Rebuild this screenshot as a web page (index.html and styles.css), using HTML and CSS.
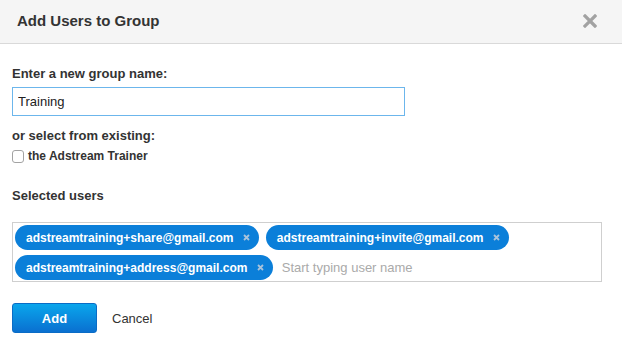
FILE: index.html
```html
<!DOCTYPE html>
<html lang="en">
<head>
    <meta charset="UTF-8" />
    <meta name="viewport" content="width=device-width, initial-scale=1.0" />
    <title>Add Users to Group</title>
    <link rel="stylesheet" href="styles.css">
</head>
<body>
    <div class="modal">
        <header class="modal-header">
            <h1>Add Users to Group</h1>
            <button class="close" aria-label="Close">
                <svg width="14" height="14" viewBox="0 0 14 14">
                    <path d="M2 2 L12 12 M12 2 L2 12" stroke="#a2a2a2" stroke-width="3.2" stroke-linecap="square" />
                </svg>
            </button>
        </header>
        <section class="modal-body">
            <label class="field-label" for="groupName">Enter a new group name:</label>
            <input type="text" id="groupName" class="group-input" value="Training" />

            <p class="field-label existing">or select from existing:</p>
            <label class="check-row">
                <input type="checkbox" class="check" />
                <span>the Adstream Trainer</span>
            </label>

            <p class="field-label selected">Selected users</p>
            <div class="tag-box">
                <span class="tag">adstreamtraining+share@gmail.com <i class="tag-remove"><svg width="7" height="7" viewBox="0 0 7 7"><path d="M1 1 L6 6 M6 1 L1 6" stroke="#a9c3db" stroke-width="1.8" /></svg></i></span>
                <span class="tag">adstreamtraining+invite@gmail.com <i class="tag-remove"><svg width="7" height="7" viewBox="0 0 7 7"><path d="M1 1 L6 6 M6 1 L1 6" stroke="#a9c3db" stroke-width="1.8" /></svg></i></span>
                <span class="tag">adstreamtraining+address@gmail.com <i class="tag-remove"><svg width="7" height="7" viewBox="0 0 7 7"><path d="M1 1 L6 6 M6 1 L1 6" stroke="#a9c3db" stroke-width="1.8" /></svg></i></span>
                <input type="text" class="tag-input" placeholder="Start typing user name" />
            </div>

            <div class="actions">
                <button class="btn-add">Add</button>
                <a href="#" class="cancel">Cancel</a>
            </div>
        </section>
    </div>
</body>
</html>
```

FILE: styles.css
```css
html, body {
    margin: 0;
    padding: 0;
    font-family: 'Liberation Sans', Arial, sans-serif;
    font-size: 13px;
    color: #333;
    background-color: #fff;
}
* {
    box-sizing: border-box;
}
.modal-header {
    display: flex;
    align-items: center;
    justify-content: space-between;
    height: 44px;
    padding: 0 25px 2px 17px;
    background-color: #f5f5f5;
    border-bottom: 1px solid #d9d9d9;
}
.modal-header h1 {
    margin: 0;
    font-size: 15px;
    font-weight: bold;
    color: #333;
}
.close {
    display: flex;
    padding: 0;
    border: none;
    background: none;
    cursor: pointer;
}
.modal-body {
    padding: 22px 12px 0;
}
.field-label {
    display: block;
    margin: 0;
    font-weight: bold;
    line-height: 16px;
    color: #333;
}
.group-input {
    display: block;
    width: 393px;
    height: 29px;
    margin-top: 5px;
    padding: 0 5px;
    border: 1px solid #6cb6ec;
    outline: none;
    font-family: inherit;
    font-size: 13px;
    color: #222;
}
.existing {
    margin-top: 12px;
}
.check-row {
    display: flex;
    align-items: center;
    gap: 4px;
    margin-top: 4px;
    line-height: 16px;
    font-size: 12px;
    font-weight: bold;
}
.check {
    -webkit-appearance: none;
    appearance: none;
    width: 12px;
    height: 13px;
    margin: 0;
    border: 1px solid #a3a3a3;
    border-radius: 3px;
    background: #fff;
}
.selected {
    margin-top: 24px;
}
.tag-box {
    display: flex;
    flex-wrap: wrap;
    align-items: center;
    column-gap: 7px;
    row-gap: 3px;
    width: 590px;
    height: 60px;
    margin-top: 18px;
    padding: 1px 2px 0;
    border: 1px solid #cfcfcf;
}
.tag {
    display: inline-flex;
    align-items: center;
    height: 25px;
    padding: 0 9px 0 11px;
    border-radius: 13px;
    background-color: #0b7fd9;
    color: #fff;
    font-size: 12px;
    font-weight: bold;
    white-space: pre;
}
.tag-remove {
    display: flex;
    margin-left: 6px;
}
.tag-input {
    flex: 1;
    min-width: 150px;
    height: 25px;
    padding: 0 2px;
    border: none;
    outline: none;
    font-family: inherit;
    font-size: 13px;
}
.tag-input::placeholder {
    color: #aaa;
}
.actions {
    display: flex;
    align-items: center;
    gap: 15px;
    margin-top: 21px;
}
.btn-add {
    width: 85px;
    height: 30px;
    border: 1px solid #0a6cc6;
    border-radius: 3px;
    background: linear-gradient(#0aa6ec, #0a70d0);
    color: #fff;
    font-family: inherit;
    font-size: 13px;
    font-weight: bold;
    cursor: pointer;
}
.cancel {
    color: #333;
    text-decoration: none;
}
```
